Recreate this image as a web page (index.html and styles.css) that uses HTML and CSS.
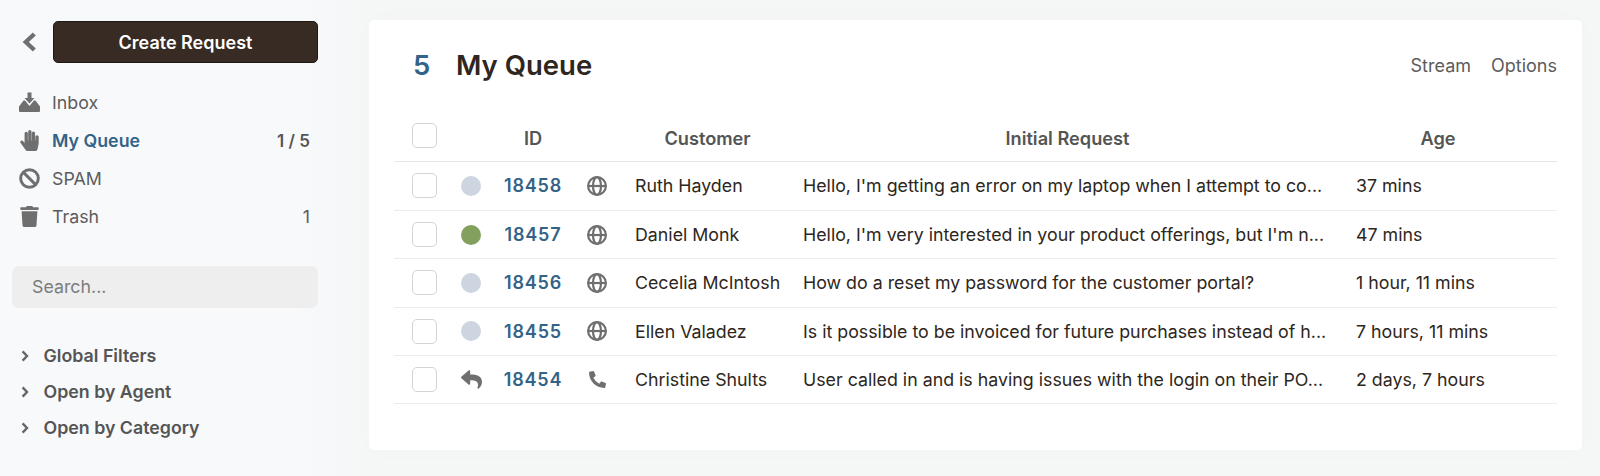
FILE: index.html
```html
<!DOCTYPE html>
<html lang="en">
<head>
<meta charset="utf-8">
<title>My Queue</title>
<link rel="stylesheet" href="styles.css">
</head>
<body>
<svg class="defs" aria-hidden="true">
  <symbol id="i-globe" viewBox="0 0 20 20"><g fill="none" stroke="currentColor" stroke-width="2.200"><circle cx="10" cy="10" r="8.900"/><ellipse cx="10" cy="10" rx="4" ry="8.900"/><path d="M1 10h18"/></g></symbol>
  <symbol id="i-phone" viewBox="0 0 512 512"><path d="M497.39 361.8l-112-48a24 24 0 0 0-28 6.9l-49.6 60.6A370.66 370.66 0 0 1 130.6 204.11l60.6-49.6a23.94 23.94 0 0 0 6.9-28l-48-112A24.16 24.16 0 0 0 122.6.61l-104 24A24 24 0 0 0 0 48c0 256.5 207.9 464 464 464a24 24 0 0 0 23.4-18.6l24-104a24.29 24.29 0 0 0-14.01-27.6z" fill="currentColor"/></symbol>
  <symbol id="i-reply" viewBox="0 0 512 512"><path fill="currentColor" d="M8.309 189.836L184.313 37.851C199.719 24.546 224 35.347 224 56.015v80.053c160.629 1.839 288 34.032 288 186.258 0 61.441-39.581 122.309-83.333 154.132-13.653 9.931-33.111-2.533-28.077-18.631 45.344-145.012-21.507-183.51-176.59-185.742V360c0 20.7-24.3 31.453-39.687 18.164l-176.004-152c-11.071-9.562-11.086-26.753 0-36.328z"/></symbol>
  <symbol id="i-chev" viewBox="0 0 8 12"><path d="M1.6 1.4 6 6l-4.4 4.6" fill="none" stroke="currentColor" stroke-width="2.4"/></symbol>
</svg>
<div class="app">
  <aside class="sidebar">
    <div class="top">
      <svg class="back" viewBox="0 0 14 18"><path d="M11.500 1.500 3.500 9l8 7.500" fill="none" stroke="currentColor" stroke-width="4"/></svg>
      <button class="create">Create Request</button>
    </div>
    <nav class="nav">
      <div class="nav-item">
        <svg class="nav-icon" viewBox="0 0 21 20"><path fill="currentColor" d="M8.500 0h4v5.500h3l-5 5.500-5-5.500h3zM4.500 8H6l4.500 5.500L15 8h1.500L21 14v4.500a1 1 0 0 1-1 1H1a1 1 0 0 1-1-1V14z"/></svg>
        <span class="nav-label">Inbox</span>
      </div>
      <div class="nav-item active">
        <svg class="nav-icon" viewBox="0 0 448 512"><path fill="currentColor" d="M408.781 128.007C386.356 127.578 368 146.36 368 168.79V256h-8V79.79c0-22.43-18.356-41.212-40.781-40.783C297.488 39.423 280 57.169 280 79v177h-8V40.79C272 18.36 253.644-.422 231.219.007 209.488.423 192 18.169 192 40v216h-8V80.790c0-22.430-18.356-41.212-40.781-40.783C121.488 40.423 104 58.169 104 80v235.992l-31.648-43.519c-12.993-17.866-38.009-21.817-55.877-8.823-17.865 12.994-21.815 38.010-8.822 55.877l125.601 172.705A48 48 0 0 0 172.073 512h197.590c22.274 0 41.622-15.324 46.724-37.006l26.508-112.660a192.011 192.011 0 0 0 5.104-43.975V168.790c.001-22.430-18.355-40.354-39.999-40.783z"/></svg>
        <span class="nav-label">My Queue</span>
        <span class="nav-count strong">1 / 5</span>
      </div>
      <div class="nav-item">
        <svg class="nav-icon" viewBox="0 0 20 20"><g fill="none" stroke="currentColor" stroke-width="2.8"><circle cx="10" cy="10" r="8.400"/><path d="M4.200 4.200l11.600 11.600"/></g></svg>
        <span class="nav-label">SPAM</span>
      </div>
      <div class="nav-item">
        <svg class="nav-icon" viewBox="0 0 448 512"><path fill="currentColor" d="M432 32H312l-9.400-18.700A24 24 0 0 0 281.100 0H166.800a23.720 23.720 0 0 0-21.400 13.300L136 32H16A16 16 0 0 0 0 48v32a16 16 0 0 0 16 16h416a16 16 0 0 0 16-16V48a16 16 0 0 0-16-16zM53.200 467a48 48 0 0 0 47.900 45h245.800a48 48 0 0 0 47.900-45L416 128H32z"/></svg>
        <span class="nav-label">Trash</span>
        <span class="nav-count">1</span>
      </div>
    </nav>
    <div class="search">Search...</div>
    <div class="filters">
      <div class="filter"><svg class="filter-chev"><use href="#i-chev"/></svg>Global Filters</div>
      <div class="filter"><svg class="filter-chev"><use href="#i-chev"/></svg>Open by Agent</div>
      <div class="filter"><svg class="filter-chev"><use href="#i-chev"/></svg>Open by Category</div>
    </div>
  </aside>
  <main class="card">
    <header class="card-head">
      <h1 class="title"><span class="title-count">5</span>My Queue</h1>
      <div class="links"><span>Stream</span><span>Options</span></div>
    </header>
    <table class="queue">
      <thead>
        <tr>
          <th class="c-check"><span class="box"></span></th>
          <th class="c-state"></th>
          <th class="c-id">ID</th>
          <th class="c-chan"></th>
          <th class="c-cust">Customer</th>
          <th class="c-req">Initial Request</th>
          <th class="c-age">Age</th>
        </tr>
      </thead>
      <tbody>
        <tr>
          <td class="c-check"><span class="box"></span></td>
          <td class="c-state"><span class="dot"></span></td>
          <td class="c-id">18458</td>
          <td class="c-chan"><svg class="chan"><use href="#i-globe"/></svg></td>
          <td class="c-cust">Ruth Hayden</td>
          <td class="c-req">Hello, I'm getting an error on my laptop when I attempt to co...</td>
          <td class="c-age">37 mins</td>
        </tr>
        <tr>
          <td class="c-check"><span class="box"></span></td>
          <td class="c-state"><span class="dot green"></span></td>
          <td class="c-id">18457</td>
          <td class="c-chan"><svg class="chan"><use href="#i-globe"/></svg></td>
          <td class="c-cust">Daniel Monk</td>
          <td class="c-req">Hello, I'm very interested in your product offerings, but I'm n...</td>
          <td class="c-age">47 mins</td>
        </tr>
        <tr>
          <td class="c-check"><span class="box"></span></td>
          <td class="c-state"><span class="dot"></span></td>
          <td class="c-id">18456</td>
          <td class="c-chan"><svg class="chan"><use href="#i-globe"/></svg></td>
          <td class="c-cust">Cecelia McIntosh</td>
          <td class="c-req">How do a reset my password for the customer portal?</td>
          <td class="c-age">1 hour, 11 mins</td>
        </tr>
        <tr>
          <td class="c-check"><span class="box"></span></td>
          <td class="c-state"><span class="dot"></span></td>
          <td class="c-id">18455</td>
          <td class="c-chan"><svg class="chan"><use href="#i-globe"/></svg></td>
          <td class="c-cust">Ellen Valadez</td>
          <td class="c-req">Is it possible to be invoiced for future purchases instead of h...</td>
          <td class="c-age">7 hours, 11 mins</td>
        </tr>
        <tr>
          <td class="c-check"><span class="box"></span></td>
          <td class="c-state"><svg class="reply"><use href="#i-reply"/></svg></td>
          <td class="c-id">18454</td>
          <td class="c-chan"><svg class="chan phone"><use href="#i-phone"/></svg></td>
          <td class="c-cust">Christine Shults</td>
          <td class="c-req">User called in and is having issues with the login on their PO...</td>
          <td class="c-age">2 days, 7 hours</td>
        </tr>
      </tbody>
    </table>
  </main>
</div>
</body>
</html>
```
FILE: styles.css
```css
* { box-sizing: border-box; }
html, body { margin: 0; height: 100%; }
body {
  font-family: Inter, "Liberation Sans", sans-serif;
  color: #2e2620;
  background: linear-gradient(90deg, #f8f9fb 0, #f8f9fb 300px, #f5f6f6 372px);
  overflow: hidden;
}
.defs { display: none; }
.app { display: flex; height: 476px; }
.sidebar {
  width: 336px;
  flex: none;
  padding: 21px 18px 0 12px;
  color: #5c5c5c;
}
.top { display: flex; align-items: center; height: 42px; }
.back { width: 15px; height: 20px; margin-left: 10px; margin-right: 16px; color: #6f6f6f; flex: none; }
.create {
  flex: 1;
  height: 42px;
  padding: 1px 0 0;
  border: 1px solid #1f1812;
  border-radius: 5px;
  background: #372b24;
  color: #fff;
  font: 600 18px Inter, sans-serif;
}
.nav { margin-top: 20.500px; }
.nav-item {
  display: flex;
  align-items: center;
  height: 38px;
  padding: 0 8px 0 7px;
  font-size: 17.800px;
}
.nav-icon { width: 21px; height: 21px; color: #6f6f6f; flex: none; }
.nav-label { margin-left: 12px; }
.nav-count { margin-left: auto; }
.nav-count.strong { font-weight: 600; color: #555; font-size: 17px; }
.active .nav-label { color: #336387; font-weight: 600; }
.search {
  margin-top: 30.500px;
  height: 42px;
  padding-left: 20px;
  line-height: 42px;
  border-radius: 7px;
  background: #eeeeef;
  color: #7c7c7c;
  font-size: 17.800px;
}
.filters { margin-top: 29.500px; }
.filter {
  display: flex;
  align-items: center;
  height: 36px;
  padding-left: 9px;
  font-size: 17.800px;
  font-weight: 600;
  color: #555;
}
.filter-chev { width: 8px; height: 12px; margin-right: 14.500px; color: #666; flex: none; }
.card {
  width: 1213px;
  height: 430px;
  margin: 20px 0 0 33px;
  padding: 0 25px;
  border-radius: 5px;
  background: #fff;
  box-shadow: 0 0 30px rgba(0, 0, 0, .015);
}
.card-head { display: flex; align-items: center; justify-content: space-between; height: 90px; }
.title { margin: 0; font-size: 27.500px; font-weight: 600; color: #2e2620; }
.title-count { display: inline-block; width: 62px; padding-left: 19px; color: #336387; font-weight: 600; }
.links { display: flex; gap: 20px; font-size: 18px; color: #5c5c5c; }
.queue { width: 1163px; border-collapse: collapse; table-layout: fixed; font-size: 17.800px; margin-top: 3px; }
.queue th { height: 48px; border-bottom: 1px solid #e8e8e8; font-size: 18.200px; font-weight: 600; color: #555; text-align: center; padding: 3px 10px 0; }
.queue td { height: 48.400px; border-bottom: 1px solid #ececec; padding: 0 10px; white-space: nowrap; overflow: hidden; }
.queue tbody tr:first-child td { height: 49.400px; }
.c-check { width: 61px; }
.queue .c-check { padding: 0 0 0 18px; text-align: left; }
.queue th.c-check { padding-bottom: 2px; }
.c-state { width: 39px; }
.queue .c-state { padding: 0; text-align: left; }
.c-id { width: 78px; }
.queue td.c-id { color: #336387; font-size: 18px; font-weight: 600; letter-spacing: .8px; text-align: center; padding: 0; }
.c-chan { width: 53px; }
.queue .c-chan { padding: 0 0 0 15px; }
.c-cust { width: 168px; }
.c-req { width: 553px; }
.c-age { width: 211px; }
.queue th.c-cust { padding-right: 13px; }
.queue th.c-req { padding-right: 14px; }
.queue th.c-age { padding-right: 37px; }
.box { display: block; width: 25px; height: 25px; border: 1.500px solid #d4d4d4; border-radius: 5px; background: #fff; }
.dot { display: block; width: 20px; height: 20px; margin-left: 6px; border-radius: 50%; background: #cdd5e0; }
.dot.green { background: #83a05e; }
.reply { display: block; width: 21px; height: 21px; margin-left: 6px; color: #6f6f6f; }
.chan { display: block; width: 20px; height: 20px; color: #6f6f6f; }
.phone { width: 17px; height: 17px; margin-left: 2px; }
```
